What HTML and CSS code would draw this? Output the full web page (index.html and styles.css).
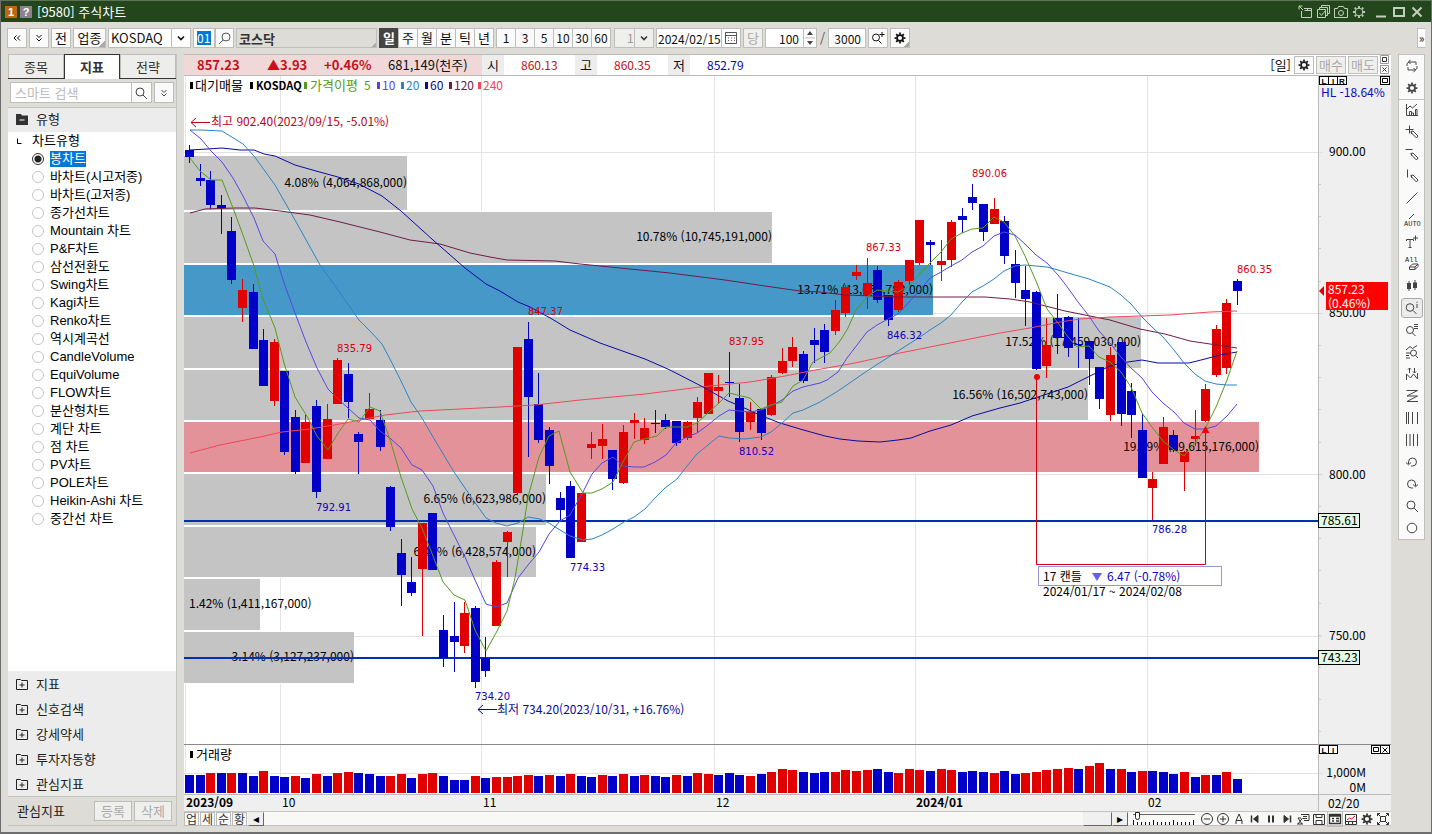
FILE: index.html
```html
<!DOCTYPE html>
<html lang="ko">
<head>
<meta charset="utf-8">
<title>[9580] 주식차트</title>
<link rel="stylesheet" href="styles.css">
</head>
<body>
<svg class="defs" aria-hidden="true">
  <symbol id="gear" viewBox="-1 -1 16 16"><circle cx="7" cy="7" r="3.4" fill="none" stroke="currentColor" stroke-width="2"/><path d="M7 .8v2.4M7 10.8v2.4M.8 7h2.4M10.8 7h2.4M2.6 2.6l1.8 1.8M9.6 9.6l1.8 1.8M11.4 2.6L9.6 4.4M4.4 9.6l-1.8 1.8" stroke="currentColor" stroke-width="2" fill="none"/></symbol>
  <symbol id="lens" viewBox="0 0 14 14"><circle cx="6" cy="6" r="4"/><path d="M9 9l4 4"/></symbol>
  <symbol id="chev" viewBox="0 0 14 14"><path d="M4 5.5l3 3 3-3" stroke-width="1.6"/></symbol>
  <symbol id="dchev" viewBox="0 0 14 14"><path d="M4.500 4l2.500 2.500L9.500 4M4.500 7.500L7 10l2.500-2.500"/></symbol>
  <symbol id="dleft" viewBox="0 0 14 14"><path d="M6.500 4.500L4 7l2.500 2.500M10 4.500L7.500 7 10 9.500"/></symbol>
  <symbol id="pencil" viewBox="0 0 14 14"><path d="M6 6.500l2-.5 5 5-1.500 2-5-5zM6 6.500l1 2.500"/></symbol>
  <symbol id="plusbox" viewBox="0 0 14 14"><path d="M1.500 2.500h4l1 1h6v9h-11zM7 5.500v5M4.500 8h5"/></symbol>
</svg>
<div class="window">
  <header class="titlebar">
    <span class="badge badge-orange">1</span><span class="badge badge-grey">?</span>
    <h1 class="title">[9580] 주식차트</h1>
    <div class="win-tools">
      <button aria-label="분리"><svg class="ic" viewBox="0 0 14 14"><path d="M1 1l4 4M1 1h3.500M1 1v3.500M6 3.500h7.500v9h-10V6M9.500 3.500V6M6.500 5.500h7"/></svg></button>
      <button aria-label="복사"><svg class="ic" viewBox="0 0 14 14"><path d="M1.500 4.500h8v8h-8zM3.500 4V2.500h8v8H10M5.500 2V.5h8v8H12M3.500 8l2 2.500 4-5"/></svg></button>
      <button aria-label="캡처"><svg class="ic" viewBox="0 0 14 14"><path d="M.5 3.500h3l1-2h5l1 2h3v9H.5z"/><circle cx="7" cy="8" r="2.500"/></svg></button>
      <button aria-label="설정"><svg class="ic" viewBox="0 0 14 14"><circle cx="7" cy="7" r="3.800"/><path stroke-width="1.800" d="M7 1v2M7 11v2M1 7h2M11 7h2M2.700 2.700l1.400 1.400M10 10l1.300 1.300M11.300 2.700L10 4M4 10l-1.300 1.300"/></svg></button>
      <button class="wbtn" aria-label="최소화"><svg class="ic thick" viewBox="0 0 14 14"><path d="M2 11.500h10"/></svg></button>
      <button class="wbtn" aria-label="최대화"><svg class="ic thick" viewBox="0 0 14 14"><path d="M2 3h10v8H2z"/></svg></button>
      <button class="wbtn" aria-label="닫기"><svg class="ic thick" viewBox="0 0 14 14"><path d="M2.500 2.500l9 9M11.500 2.500l-9 9"/></svg></button>
    </div>
  </header>

  <div class="toolbar">
    <button class="tb sq" aria-label="왼쪽 접기"><svg class="ic"><use href="#dleft"/></svg></button>
    <button class="tb sq" aria-label="펼치기"><svg class="ic"><use href="#dchev"/></svg></button>
    <button class="tb sq">전</button>
    <button class="tb wide corner">업종</button>
    <label class="pick pick-market"><select aria-label="시장"><option>KOSDAQ</option></select><svg class="ic"><use href="#chev"/></svg></label>
    <label class="code"><input aria-label="업종 코드" value="01" size="2"></label>
    <button class="tb sq joined" aria-label="검색"><svg class="ic flip"><use href="#lens"/></svg></button>
    <input class="name" aria-label="업종명" value="코스닥" readonly>
    <div class="seg">
      <button class="tb on">일</button><button class="tb">주</button><button class="tb">월</button><button class="tb">분</button><button class="tb">틱</button><button class="tb">년</button>
    </div>
    <div class="seg seg-num">
      <button class="tb">1</button><button class="tb">3</button><button class="tb">5</button><button class="tb">10</button><button class="tb">30</button><button class="tb">60</button>
    </div>
    <label class="pick pick-unit"><select aria-label="단위" disabled><option>1</option></select><svg class="ic"><use href="#chev"/></svg></label>
    <div class="datebox"><input aria-label="날짜" value="2024/02/15"><button aria-label="달력"><svg class="ic" viewBox="0 0 14 14"><path d="M1.500 1.500h11v11h-11zM1.500 4.500h11M4 7h1M7 7h1M10 7h1M4 9.500h1M7 9.500h1M10 9.500h1"/></svg></button></div>
    <button class="tb sq dim">당</button>
    <div class="spin"><input aria-label="표시 개수" value="100"><svg class="spin-ic" viewBox="0 0 12 18"><path d="M6 2l3 4H3zM6 16l3-4H3z" fill="#444"/><path d="M1 9h10" stroke="#bbb"/></svg></div>
    <span class="slash">/</span>
    <input class="total" aria-label="전체 개수" value="3000">
    <button class="tb sq" aria-label="확대"><svg class="ic" viewBox="0 0 14 14"><circle cx="5" cy="6.500" r="3.500"/><path d="M7.500 9.500l3 3M11 1v5M8.500 3.500h5"/></svg></button>
    <button class="tb sq corner" aria-label="설정"><svg class="ic"><use href="#gear"/></svg></button>
    <button class="fold" aria-label="오른쪽 펼치기">»</button>
  </div>

  <div class="main">
    <aside class="sidebar">
      <nav class="tabs"><button>종목</button><button class="on">지표</button><button>전략</button></nav>
      <div class="search"><input aria-label="스마트 검색" placeholder="스마트 검색"><button aria-label="찾기"><svg class="ic"><use href="#lens"/></svg></button><button class="apart" aria-label="더 보기"><svg class="ic"><use href="#dchev"/></svg></button></div>
      <h2 class="group"><svg class="ic folder" viewBox="0 0 14 14"><path d="M1 2h5l1 1.500h6V13H1z" fill="#333" stroke="none"/><path d="M4.500 8h5" stroke="#fff"/></svg>유형</h2>
      <div class="tree">
        <div class="tree-root"><svg class="ic" viewBox="0 0 14 14"><path d="M5.500 4.500v5h4"/></svg>차트유형</div>
        <label class="row sel"><input type="radio" name="t" checked><span>봉차트</span></label>
        <label class="row"><input type="radio" name="t"><span>바차트(시고저종)</span></label>
        <label class="row"><input type="radio" name="t"><span>바차트(고저종)</span></label>
        <label class="row"><input type="radio" name="t"><span>종가선차트</span></label>
        <label class="row"><input type="radio" name="t"><span>Mountain 차트</span></label>
        <label class="row"><input type="radio" name="t"><span>P&amp;F차트</span></label>
        <label class="row"><input type="radio" name="t"><span>삼선전환도</span></label>
        <label class="row"><input type="radio" name="t"><span>Swing차트</span></label>
        <label class="row"><input type="radio" name="t"><span>Kagi차트</span></label>
        <label class="row"><input type="radio" name="t"><span>Renko차트</span></label>
        <label class="row"><input type="radio" name="t"><span>역시계곡선</span></label>
        <label class="row"><input type="radio" name="t"><span>CandleVolume</span></label>
        <label class="row"><input type="radio" name="t"><span>EquiVolume</span></label>
        <label class="row"><input type="radio" name="t"><span>FLOW차트</span></label>
        <label class="row"><input type="radio" name="t"><span>분산형차트</span></label>
        <label class="row"><input type="radio" name="t"><span>계단 차트</span></label>
        <label class="row"><input type="radio" name="t"><span>점 차트</span></label>
        <label class="row"><input type="radio" name="t"><span>PV차트</span></label>
        <label class="row"><input type="radio" name="t"><span>POLE차트</span></label>
        <label class="row"><input type="radio" name="t"><span>Heikin-Ashi 차트</span></label>
        <label class="row"><input type="radio" name="t"><span>중간선 차트</span></label>
      </div>
      <div class="accordion">
        <button><svg class="ic"><use href="#plusbox"/></svg>지표</button>
        <button><svg class="ic"><use href="#plusbox"/></svg>신호검색</button>
        <button><svg class="ic"><use href="#plusbox"/></svg>강세약세</button>
        <button><svg class="ic"><use href="#plusbox"/></svg>투자자동향</button>
        <button><svg class="ic"><use href="#plusbox"/></svg>관심지표</button>
      </div>
      <div class="side-foot"><span>관심지표</span><button disabled>등록</button><button disabled>삭제</button></div>
    </aside>

    <section class="panel">
      <div class="quote">
        <div class="quote-pink"><b class="q-price">857.23</b><b class="q-diff">▲3.93</b><b class="q-rate">+0.46%</b><span>681,149(천주)</span></div>
        <span class="q-key">시</span><span class="q-val up">860.13</span>
        <span class="q-key">고</span><span class="q-val up">860.35</span>
        <span class="q-key">저</span><span class="q-val down">852.79</span>
        <span class="q-period">[일]</span>
        <button class="qb sq" aria-label="차트 설정"><svg class="ic"><use href="#gear"/></svg></button>
        <button class="qb" disabled>매수</button><button class="qb" disabled>매도</button>
        <svg class="mini" viewBox="0 0 10 20"><path d="M.5.5h8v8h-8zM.5 10.500h8v8h-8z" fill="#fff" stroke="#999"/><path d="M2.500 2.500h4v4h-4zM2.500 12.500l4 4M6.500 12.500l-4 4" fill="none" stroke="#333"/></svg>
      </div>
      <svg class="chart" id="chart" viewBox="184 76 1207 735" preserveAspectRatio="xMinYMin meet" role="img" aria-label="코스닥 일봉 차트"></svg>
      <div class="bottombar">
        <button class="bt">업</button><button class="bt">세</button><button class="bt">순</button><button class="bt">황</button>
        <button class="arrow" aria-label="왼쪽">◂</button>
        <div class="track"><div class="thumb"></div></div>
        <button class="arrow" aria-label="오른쪽">▸</button>
        <div class="zoomer"><input type="range" aria-label="배율" min="0" max="100" value="3"><svg viewBox="0 0 62 5"><path id="ticks" stroke="#111"/></svg></div>
        <div class="icons">
          <button aria-label="축소"><svg class="ic" viewBox="0 0 14 14"><circle cx="7" cy="7" r="5.500"/><path d="M4 7h6"/></svg></button>
          <button aria-label="확대"><svg class="ic" viewBox="0 0 14 14"><circle cx="7" cy="7" r="5.500"/><path d="M4 7h6M7 4v6"/></svg></button>
          <button aria-label="자동"><svg class="ic" viewBox="0 0 14 14"><path d="M4 12V9l3-7 3 7v3M4 8.500h6"/></svg></button>
          <button aria-label="처음"><svg class="ic" viewBox="0 0 14 14"><path d="M3.500 3.500v7" stroke-width="1.500"/><path d="M10 3.500v7L5.500 7z" fill="currentColor"/></svg></button>
          <button aria-label="정지"><svg class="ic thick" viewBox="0 0 14 14"><path d="M5 3.500v7M9 3.500v7"/></svg></button>
          <button aria-label="마지막"><svg class="ic" viewBox="0 0 14 14"><path d="M10.500 3.500v7" stroke-width="1.500"/><path d="M4 3.500v7L8.500 7z" fill="currentColor"/></svg></button>
          <button aria-label="되돌리기"><svg class="ic" viewBox="0 0 14 14"><path d="M5 2.500h8v6H8M7 4.500h4M7 6.500h4M2 6l4 6M6.500 6L2 12M1 12h6M2 6h3"/></svg></button>
          <button aria-label="저장"><svg class="ic" viewBox="0 0 14 14"><path d="M1.500 2.500h11v10h-11zM4 2.500v3h6v-3M4 12.500v-4h6v4"/></svg></button>
          <button class="on" aria-label="표"><svg class="ic" viewBox="0 0 14 14"><path d="M1.500 2.500h11v9h-11zM1.500 4h11M4 6.500h2M4 9h2M8 6.500h3M8 9h3" stroke-width="1.400"/></svg></button>
          <button aria-label="지표 차트"><svg class="ic" viewBox="0 0 14 14"><path d="M1.500 2.500h11v10h-11zM1.500 9.500h11M4.500 9.500v3M8.500 9.500v3"/><path d="M3 8l2.500-2 2 1L11 4" stroke="#b22"/></svg></button>
          <button aria-label="설정"><svg class="ic"><use href="#gear"/></svg></button>
          <button aria-label="전체 화면"><svg class="ic" viewBox="0 0 14 14"><path d="M4.500 4.500h5v5h-5zM1.500 4V1.500H4M10 1.500h2.500V4M1.500 10v2.500H4M10 12.500h2.500V10M1.500 1.500l3 3M12.500 1.500l-3 3M1.500 12.500l3-3M12.500 12.500l-3-3"/></svg></button>
        </div>
      </div>
    </section>

    <nav class="rail">
      <button aria-label="새로고침"><svg class="ic" viewBox="0 0 14 14"><path d="M2 7V4.500L4 3h7v3M5.500.8L3.500 3l2 2M12 7v2.500L10 11H3V8M8.500 9l2 2-2 2.200"/></svg></button>
      <button aria-label="설정"><svg class="ic"><use href="#gear"/></svg></button>
      <hr>
      <button aria-label="지표"><svg class="ic" viewBox="0 0 14 14"><path d="M1.500 1v11.500H13M2 6l3-3 2.500 2L12 1M4.500 12V8.500h2V12M6.500 12v-2h2v2M10.500 12V6.500h1.500V12"/></svg></button>
      <button aria-label="십자선"><svg class="ic" viewBox="0 0 14 14"><path d="M4.500.5v8M.5 4.500h8"/><use href="#pencil"/></svg></button>
      <button aria-label="수평선"><svg class="ic" viewBox="0 0 14 14"><path d="M.5 2.500h7"/><use href="#pencil"/></svg></button>
      <button aria-label="수직선"><svg class="ic" viewBox="0 0 14 14"><path d="M2.500.5v8"/><use href="#pencil"/></svg></button>
      <button aria-label="추세선"><svg class="ic" viewBox="0 0 14 14"><path d="M1.500 12.500l11-11"/></svg></button>
      <button aria-label="자동 추세선"><svg class="ic auto" viewBox="0 0 18 14"><path d="M6 6l5-5"/><text x="1" y="13">AUTO</text></svg></button>
      <button aria-label="글자"><svg class="ic" viewBox="0 0 14 14"><path d="M1.500 6V4.500h7V6M5 4.500v8M3.500 12.500h3M10.500.5v5M8 3h5"/></svg></button>
      <button aria-label="모두 지우기"><svg class="ic auto" viewBox="0 0 14 14"><text x="0" y="5">All</text><path d="M4.500 10l3-3h5.500v2.500l-3 3H4.500zM4.500 10h5.500v2.500M10 10l3-3"/></svg></button>
      <button aria-label="봉"><svg class="ic" viewBox="0 0 14 14"><path d="M4 2v10M10 1v10"/><path d="M2 4h4v6H2zM8 3.500h4V9H8z" fill="currentColor" stroke="none"/></svg></button>
      <button class="on" aria-label="정보 조회"><svg class="ic" viewBox="0 0 14 14"><circle cx="5" cy="6.500" r="3.800"/><path d="M8 9.500l3.500 3.500M12 3v4M12 .8v1"/></svg></button>
      <button aria-label="목록 조회"><svg class="ic" viewBox="0 0 14 14"><circle cx="5" cy="7" r="3.500"/><path d="M7.500 10l3 3M9 1.500h4M9 3.500h4M9 5.500h4"/></svg></button>
      <button aria-label="차트 조회"><svg class="ic" viewBox="0 0 14 14"><path d="M1 5l4-3.500 2.500 2L12 .5M1 8h4M1 10.500h3M1 13h4"/><circle cx="8.500" cy="8" r="3"/><path d="M10.500 10.500l2.500 2.500"/></svg></button>
      <button aria-label="고저 표시"><svg class="ic" viewBox="0 0 14 14"><path d="M1.500 13V7l4 4 3-4 4 5V6M4.500 6V1M3 2.500L4.500 1 6 2.500M9.500 1v5M8 4.500L9.500 6 11 4.500"/></svg></button>
      <button aria-label="지그재그"><svg class="ic" viewBox="0 0 14 14"><path d="M1.500 1.500h11L2 7h10.500L2 12.500h11"/></svg></button>
      <button aria-label="시간대"><svg class="ic" viewBox="0 0 14 14"><path d="M1.500 1v12M3.500 1v12M7.500 1v12M12.500 1v12"/></svg></button>
      <button aria-label="등간격"><svg class="ic" viewBox="0 0 14 14"><path d="M1.500 1v12M5 1v12M8.500 1v12M12.500 1v12"/></svg></button>
      <button aria-label="이전"><svg class="ic" viewBox="0 0 14 14"><path d="M3.500 9V7a4 4 0 1 1 4 4H6M1 7.500l2.500 2.300L6 7.500"/></svg></button>
      <button aria-label="다음"><svg class="ic" viewBox="0 0 14 14"><path d="M10.500 9V7a4 4 0 1 0-4 4H8M13 7.500l-2.500 2.300L8 7.500"/></svg></button>
      <button aria-label="돋보기"><svg class="ic"><use href="#lens"/></svg></button>
      <button aria-label="원"><svg class="ic" viewBox="0 0 14 14"><circle cx="7" cy="7" r="4.800"/></svg></button>
    </nav>
  </div>
</div>
<script src="chart.js"></script>
</body>
</html>
```

FILE: styles.css
```css
* { box-sizing: border-box; }
body {
  margin: 0;
  background: #dddcd6;
  color: #111;
  font: 13px/16px "Noto Sans CJK KR", "Liberation Sans", sans-serif;
}
button, input, select { font: inherit; color: inherit; margin: 0; padding: 0; border: 0; border-radius: 0; background: none; }
.defs { display: none; }
.ic { width: 14px; height: 14px; display: block; fill: none; stroke: currentColor; stroke-width: 1; flex: none; }
.thick { stroke-width: 2; }
.flip { transform: scaleX(-1); }

.window { min-height: 100vh; display: flex; flex-direction: column; border: solid #6e6e6e; border-width: 0 1px 2px 1px; }

.titlebar { display: flex; align-items: center; height: 22px; padding: 0 7px 0 4px; gap: 3px; background: #24461c; border-top: 1px solid #5c7355; color: #fff; }
.badge { width: 12px; height: 12px; font: bold 11px/12px "Liberation Sans", sans-serif; text-align: center; }
.badge-orange { background: #c0660c; }
.badge-grey { background: #8a8290; }
.title { margin: 0 0 0 2px; font-size: 13px; font-weight: normal; }
.win-tools { margin-left: auto; display: flex; gap: 4px; color: #c3cfbe; }
.win-tools .wbtn { margin-left: 4px; margin-right: -4px; }
.win-tools .wbtn + .wbtn { margin-left: 4px; }
.win-tools button:last-child { margin-right: 0; }

.toolbar { display: flex; align-items: center; height: 32px; padding-left: 6px; gap: 2px; }
.tb { height: 20px; min-width: 18px; background: #fafafa; border: 1px solid #bdbdb9; line-height: 18px; display: flex; align-items: center; justify-content: center; }
.tb.sq { width: 20px; }
.tb.wide { width: 33px; }
.tb.joined { width: 19px; margin-left: -2px; color: #555; }
.tb.dim { color: #aaa; background: #efefed; }
.corner { background: linear-gradient(135deg, transparent 86%, #aaa 86%), #fafafa; }
.pick { display: grid; grid-template-columns: 1fr 19px; align-items: center; height: 20px; background: linear-gradient(#bdbdb9, #bdbdb9) right 18px top / 1px 100% no-repeat, #fff; border: 1px solid #bdbdb9; }
.pick select { grid-area: 1 / 1 / 2 / 3; appearance: none; width: 100%; height: 18px; padding-left: 2px; outline: 0; }
.pick .ic { grid-area: 1 / 2; justify-self: center; pointer-events: none; }
.pick-market { width: 83px; }
.pick-unit { width: 40px; margin-left: 1px; background-color: #efefed; color: #333; }
.pick-unit select { padding-left: 12px; color: #999; opacity: 1; font-size: 12px; }
.code { height: 20px; width: 22px; padding: 2px 3px; background: #fff; border: 1px solid #bdbdb9; display: flex; }
.code input { width: 14px; height: 14px; line-height: 14px; font-size: 12px; background: #0078d7; color: #fff; }
.name { width: 141px; height: 20px; padding-left: 2px; font-weight: bold; color: #333; border: 1px solid #bdbdb9; background: linear-gradient(135deg, transparent 97%, #aaa 97%), #dddcd6; }
.seg { display: flex; }
.seg .tb { width: 20px; }
.seg .tb + .tb { margin-left: -1px; }
.seg .tb.on { background: #444; border-color: #444; color: #fff; font-weight: bold; }
.seg-num, .spin, .total { font-size: 12px; }
.datebox, .spin { display: flex; align-items: center; height: 20px; background: #fff; border: 1px solid #bdbdb9; }
.datebox input { width: 65px; padding-left: 1px; font-size: 12px; height: 18px; border-right: 1px solid #bdbdb9; }
.datebox button { width: 18px; padding-left: 2px; color: #555; }
.spin input { width: 38px; height: 18px; padding-right: 4px; text-align: right; border-right: 1px solid #bdbdb9; }
.spin-ic { width: 12px; height: 18px; }
.slash { width: 7px; text-align: center; color: #555; }
.total { width: 38px; height: 20px; padding-right: 4px; text-align: right; background: #fff; border: 1px solid #bdbdb9; }
.fold { width: 8px; height: 20px; margin: 0 6px 0 auto; background: #fff; border: 1px solid #bdbdb9; border-right: 0; font-size: 12px; line-height: 16px; }

.main { flex: 1; display: flex; align-items: stretch; padding: 0 7px 6px; }
.sidebar { width: 169px; display: flex; flex-direction: column; border: solid #c4c4c0; border-width: 0 1px 1px 0; background: #ececec; margin-right: 7px; }
.tabs { display: flex; border-bottom: 1px solid #333; height: 25px; }
.tabs button { flex: 1; border: 1px solid #bdbdb9; border-bottom: 0; background: #ededeb; color: #333; }
.tabs .on { background: #fff; font-weight: bold; border-color: #333; margin-bottom: -1px; }
.search { display: flex; height: 28px; padding: 3px 2px 4px; background: #dddcd6; }
.search input { flex: 1; min-width: 0; padding-left: 4px; background: #fff; border: 1px solid #bdbdb9; }
.search input::placeholder { color: #bbb; opacity: 1; }
.search button { width: 20px; background: #fafafa; border: 1px solid #bdbdb9; border-left: 0; padding-left: 2px; color: #444; }
.search .apart { margin-left: 2px; border-left: 1px solid #bdbdb9; }
.group { display: flex; align-items: center; gap: 7px; height: 25px; margin: 0; padding: 0 0 2px 7px; font-size: 13px; font-weight: normal; color: #222; border-top: 1px solid #c4c4c0; }
.tree { flex: 1; background: #fff; color: #000; font-family: "Liberation Sans", "Noto Sans CJK KR", sans-serif; }
.tree-root { display: flex; align-items: center; height: 18px; padding-left: 4px; gap: 6px; }
.row { display: flex; align-items: center; height: 18px; padding-left: 24px; gap: 6px; }
.row span { line-height: 16px; }
.row input { appearance: none; width: 12px; height: 12px; border: 1px solid #c4c4c4; border-radius: 50%; background: #fff; }
.row input:checked { border-color: #333; background: radial-gradient(#222 0 3px, #fff 4px); }
.sel span { background: #0078d7; color: #fff; }
.accordion button { display: flex; align-items: center; gap: 7px; width: 100%; height: 25px; padding-left: 7px; color: #222; }
.side-foot { display: flex; align-items: center; gap: 2px; height: 29px; padding: 0 4px 0 9px; background: #dddcd6; border-top: 1px solid #c4c4c0; color: #222; }
.side-foot span { margin-right: auto; }
.side-foot button { width: 38px; height: 20px; background: #efefed; border: 1px solid #bdbdb9; color: #aaa; line-height: 16px; }

.panel { flex: 1; min-width: 0; display: flex; flex-direction: column; border: solid #bbb; border-width: 1px 0 0 0; background: #fff; }
.quote { display: flex; align-items: center; height: 21px; border-bottom: 1px solid #bbb; }
.quote-pink { display: flex; align-items: center; width: 298px; height: 100%; padding-left: 13px; background: #f0d8d8; white-space: nowrap; }
.quote-pink b { color: #c8101c; }
.q-price { width: 70px; }
.q-diff { width: 57px; }
.q-rate { width: 64px; }
.q-key { width: 22px; line-height: 20px; text-align: center; background: #ededed; }
.q-val { width: 71px; padding-left: 17px; font-size: 12px; }
.up { color: #c8101c; }
.down { color: #0a0aa0; }
.q-period { margin-left: auto; margin-right: 3px; }
.qb { width: 30px; height: 18px; margin-right: 2px; background: #efefed; border: 1px solid #bdbdb9; line-height: 14px; color: #aaa; }
.qb.sq { width: 20px; background: #fafafa; color: #222; padding-left: 2px; }
.mini { width: 10px; height: 20px; margin-right: 1px; }
.chart { display: block; width: 100%; flex: 1; min-height: 0; font: 12px "Noto Sans CJK KR", "Liberation Sans", sans-serif; }
.chart .small { font: 10px "DejaVu Sans", "Liberation Sans", sans-serif; }
.chart .lg { font-size: 13px; }
.chart .bold { font-weight: bold; }
.chart .name-label { font-size: 11px; font-weight: bold; }
.chart .tiny { font: bold 8px "Liberation Sans", sans-serif; }
.bottombar { display: flex; align-items: center; height: 15px; background: #f8f8f6; border: 1px solid #c4c4c0; border-width: 1px 0; color: #333; }
.bt { width: 15px; height: 14px; border: 1px solid #bbb; margin-right: 1px; font-size: 12px; line-height: 11px; background: #fafafa; }
.arrow { width: 16px; height: 14px; border: 1px solid; border-color: #eee #666 #666 #eee; background: #f0f0f0; font: 12px/10px "DejaVu Sans", sans-serif; color: #000; }
.track { flex: 1; display: flex; justify-content: flex-end; height: 14px; }
.thumb { width: 29px; border: 1px solid; border-color: #eee #666 #666 #eee; background: #f0f0f0; }
.zoomer { width: 62px; margin: 0 5px; display: grid; grid-template-rows: 8px 5px; }
.zoomer input { appearance: none; width: 100%; height: 8px; background: linear-gradient(#666, #666) 0 2px / 100% 1px no-repeat; }
.zoomer input::-webkit-slider-thumb { appearance: none; width: 5px; height: 8px; background: #fff; border: 1px solid #222; border-radius: 0 0 3px 3px; }
.zoomer svg { width: 100%; height: 5px; }
.icons { display: flex; gap: 2px; margin-right: 1px; }
.icons .on { outline: 1px solid #bbb; }

.rail { width: 27px; align-self: flex-start; margin: 0 -1px 0 7px; background: #fafafa; border: 1px solid #c0c0bc; display: flex; flex-direction: column; align-items: center; color: #444; }
.rail button { width: 22px; height: 22px; padding: 0 0 0 3px; border: 1px solid transparent; }
.rail hr { width: 100%; height: 1px; margin: 0 0 -1px; border: 0; background: #c0c0bc; }
.rail .on { height: 20px; margin: 1px 0; border-color: #aaa; border-radius: 3px; background: #ececec; }
.rail .auto text { font: 7px "Liberation Mono", monospace; fill: #222; stroke: none; }
.rail .auto[viewBox^="0 0 18"] { width: 18px; margin-left: -2px; }
```

FILE: chart.js
```js
const RED = '#e00000', BLUE = '#0000c8';
const X0 = 189.5, STEP = 10.586;

// colour, body top, body bottom, wick top, wick bottom
const candles = `B150,157,145,163 B178,181,164,186 B180,205,171,209 B205,208,195,234 B231,280,217,284
R290,308,279,322 B292,349,284,349 B340,386,329,386 R342,401,339,406 B371,452,371,455
B417,472,410,474 R422,463,415,463 B406,492,400,498 R419,459,404,459 R360,404,358,404
B374,402,363,418 B434,442,432,474 R409,419,393,419 B420,447,410,451 B487,527,486,531
B553,575,539,606 B582,593,557,596 R523,569,523,636 B513,570,513,570 B630,658,615,667
B636,642,602,672 R613,646,602,653 B608,682,606,688 B658,671,637,677 R562,626,560,626
R532,542,531,577 R347,493,347,495 B339,397,322,457 B404,440,373,443 B430,466,427,484
B498,510,492,520 B486,558,481,558 R493,542,493,542 R444,448,432,459 R439,446,424,459
B450,479,450,490 R432,483,425,484 R420,423,413,439 R428,440,418,444 B423,424,410,433
B420,427,414,429 B421,443,421,446 R422,438,421,440 R402,418,397,433 R373,414,373,414
R387,391,375,404 B382,383,352,397 B398,432,384,442 R412,422,402,430 B409,433,409,440
R377,415,375,416 R361,373,348,374 R347,361,337,367 B354,381,351,383 B340,345,328,363
B330,352,324,363 R310,331,300,335 R287,313,285,317 R272,276,265,280 R283,296,258,309
B270,300,266,303 B295,320,295,326 R282,310,280,312 R260,281,260,286 R220,263,220,265
B242,245,240,265 R261,265,240,281 R222,260,220,267 B216,220,208,233 B197,203,184,210
B204,232,204,241 R209,224,198,224 B221,256,216,264 B264,283,250,298 B290,299,266,326
B292,369,291,370 R345,366,318,378 B318,338,294,354 B317,348,316,357 B344,345,318,368
B341,359,341,385 B367,399,367,409 R355,415,347,421 B342,414,342,426 B391,415,383,438
B430,478,414,478 R479,488,472,520 R427,464,417,464 B435,450,430,452 R452,462,451,491
R436,439,410,446 R389,421,384,422 R329,375,325,377 R303,368,299,374 B281,291,279,305`.split(/\s+/);

// colour and top of each volume bar
const volume = `B775 B775 R773 B773 R773 B773 B776 R771 B776 B777 R776 B778 R774 B776 R773 R772 B773 B774 B776 R776
R774 B778 R774 R773 B776 B780 B780 R776 B778 R777 R777 R776 R775 B776 R775 B776 R774 B776 B777 R775
B776 R774 B776 R775 B776 B777 R775 B776 R773 R774 B775 B773 B775 R776 B774 R772 R769 R770 B772 B773
B772 R772 R770 R771 R770 B769 B772 R773 R769 R770 B771 R769 R770 B772 B771 B772 R773 B771 B774 R773
R772 R770 R769 R768 B769 R766 R763 B769 R769 B772 R771 B771 B772 B774 R772 B777 R775 B775 R772 B779`.split(/\s+/);

// top, height, right edge, label, label baseline, fill
const profile = [
  [156, 54, 407, '4.08% (4,064,868,000)', 187], [212, 51, 772, '10.78% (10,745,191,000)', 241],
  [265, 50, 933, '13.71% (13,665,782,000)', 294, '#4698c8'], [317, 51, 1141, '17.52% (17,459,030,000)', 346],
  [370, 50, 1088, '16.56% (16,502,743,000)', 399], [422, 50, 1259, '19.69% (19,615,176,000)', 451, '#e4929a'],
  [474, 51, 546, '6.65% (6,623,986,000)', 503], [527, 50, 536, '6.45% (6,428,574,000)', 556],
  [579, 51, 260, '1.42% (1,411,167,000)', 608], [632, 51, 354, '3.14% (3,127,237,000)', 661]
];

const averages = {
  '#6e1c44': '190,213 205,209 235,208 255,208 280,211 310,215 340,222 380,232 410,240 440,244 470,253 490,257 507,260 555,261 580,264 610,267 670,273 725,280 765,286 800,291 820,292 845,295 900,297 985,297 1010,299 1030,302 1065,311 1110,320 1140,329 1165,334 1190,341 1210,344 1237,348',
  '#f04858': '190,453 220,445 260,437 282,432 310,429 340,424 385,415 420,411 500,407 535,405 580,400 645,394 700,387 750,382 785,376 810,371 855,363 900,353 940,345 1000,333 1030,328 1060,322 1080,319 1110,317 1170,315 1210,312 1237,311',
  '#0a0aa0': '190,150 207,149 222,148 240,150 254,150 264,154 275,156 295,165 316,171 338,177 359,184 382,196 401,211 433,240 465,268 486,284 500,291 518,302 530,307 552,319 570,330 600,343 645,359 670,370 703,387 728,401 740,406 762,416 780,423 800,429 825,436 840,439 858,441 880,442 898,440 911,438 930,431 951,425 972,416 1000,408 1020,403 1047,394 1068,387 1088,377 1110,366 1121,363 1142,360 1158,363 1189,363 1205,359 1220,355 1237,352',
  '#2c84c4': '190,130 202,130 222,131 243,144 254,156 275,185 295,220 320,265 338,290 359,320 370,331 382,344 391,361 401,381 411,402 422,418 433,437 454,472 476,504 486,518 496,523 507,526 518,523 528,517 540,519 549,523 560,530 570,536 583,540 592,539 602,535 613,529 624,522 634,517 645,509 655,498 665,488 677,479 687,466 697,454 708,445 719,436 729,438 745,439 761,437 771,432 782,423 793,413 803,410 820,402 838,391 867,371 898,351 920,337 930,330 941,323 951,315 962,302 972,292 983,286 994,279 1004,271 1015,266 1025,265 1047,267 1058,270 1068,273 1089,279 1110,287 1121,295 1131,304 1142,317 1152,327 1163,337 1174,350 1184,363 1195,374 1205,381 1216,384 1227,385 1237,385',
  '#5548e0': '190,130 201,139 211,151 222,162 233,178 243,196 254,218 263,241 275,254 284,283 295,313 306,342 317,368 328,389 338,399 348,408 359,418 370,420 380,431 391,439 401,448 412,465 422,470 433,486 443,513 454,535 465,557 475,580 486,604 496,607 507,603 518,578 528,565 539,552 549,534 560,521 570,515 583,492 592,474 602,463 613,457 623,466 634,467 644,467 655,462 666,455 676,443 687,437 697,433 708,425 719,416 729,410 740,411 750,412 761,410 771,406 782,400 793,391 803,387 820,383 827,380 838,372 847,358 867,332 877,325 888,319 898,314 909,302 920,290 930,278 941,272 951,266 962,260 972,252 983,246 994,236 1004,232 1015,235 1025,244 1036,255 1047,263 1058,275 1068,288 1078,302 1089,316 1099,331 1110,343 1121,357 1131,368 1142,378 1152,392 1163,403 1174,412 1184,423 1195,429 1205,429 1216,426 1227,416 1237,404',
  '#559a1e': '190,158 200,171 211,180 222,180 233,208 243,235 254,266 263,299 275,328 284,363 295,397 308,418 317,436 328,450 338,433 348,419 359,422 370,407 380,411 391,443 401,477 412,509 422,528 433,556 443,582 454,595 465,600 475,630 486,651 496,633 507,611 515,578 523,530 528,497 539,457 549,436 559,431 570,472 583,493 592,493 602,489 613,482 623,462 634,442 644,439 657,436 666,427 676,427 687,427 697,423 708,413 719,403 729,393 750,398 761,409 771,405 782,402 793,386 803,380 813,362 830,353 840,341 848,328 856,310 867,297 877,290 888,291 898,292 909,286 920,273 930,263 941,252 951,239 962,233 972,229 983,228 994,217 1004,222 1015,236 1025,256 1036,281 1047,309 1058,323 1068,337 1077,347 1089,346 1099,357 1110,362 1121,372 1131,387 1142,413 1152,427 1163,441 1174,450 1184,456 1195,443 1205,429 1216,407 1227,380 1237,351'
};

const out = [];
const rect = (x, y, w, h, fill, extra = '') => out.push(`<rect x="${x}" y="${y}" width="${w}" height="${h}" fill="${fill}" shape-rendering="crispEdges" ${extra}/>`);
const text = (x, y, s, fill = '#000', cls = '', anchor = 'start') => out.push(`<text x="${x}" y="${y}" fill="${fill}" class="${cls}" text-anchor="${anchor}">${s}</text>`);
const path = (d, stroke, extra = 'fill="none"') => out.push(`<path d="${d}" stroke="${stroke}" ${extra}/>`);

// backgrounds and grid
rect(184, 76, 1134, 719, '#fff');
rect(1318, 76, 73, 735, '#efefef');
rect(184, 795, 1207, 16, '#efefef');
[185, 280, 481, 714, 915, 1147].forEach(x => rect(x, 76, 1, 719, '#e4e4e4'));
[152, 313, 474, 636].forEach(y => rect(184, y, 1139, 1, '#e2e2e2'));
rect(184, 773, 1139, 1, '#e2e2e2');
for (let y = 184; y < 740; y += 32.2) rect(1318, Math.round(y), 3, 1, '#ccc');

profile.forEach(([y, h, right, label, base, fill = '#c4c4c4']) => {
  rect(184, y - 1, right - 184, h + 2, '#fff');
  rect(184, y, right - 184, h, fill);
});
profile.forEach(([y, h, right, label, base]) => right < 300
  ? text(189, base, label)
  : text(right, base, label, '#000', '', 'end'));

rect(184, 520, 1134, 2, '#0030b0');
rect(184, 657, 1134, 2, '#0030b0');

candles.forEach((c, i) => {
  const [top, bottom, hi, lo] = c.slice(1).split(',').map(Number);
  const colour = c[0] === 'R' ? RED : BLUE;
  const x = Math.round(X0 + i * STEP - 0.5);
  rect(x, hi, 1, lo - hi, colour);
  rect(x - 4, top, 9, bottom - top, colour);
});
Object.entries(averages).forEach(([colour, points]) =>
  out.push(`<polyline points="${points}" fill="none" stroke="${colour}" stroke-width="1"/>`));

// highs and lows
[[337, 352, '835.79'], [528, 315, '847.37'], [729, 345, '837.95'], [866, 251, '867.33'], [972, 177, '890.06'], [1237, 273, '860.35']]
  .forEach(([x, y, s]) => text(x, y, s, '#d80010', 'small'));
[[316, 511, '792.91'], [475, 700, '734.20'], [570, 571, '774.33'], [739, 455, '810.52'], [887, 339, '846.32'], [1152, 533, '786.28']]
  .forEach(([x, y, s]) => text(x, y, s, '#1000b8', 'small'));
path('M210 122.500H191M196 118l-5 4.500 5 4.500', '#c00018');
text(211, 126, '최고 902.40(2023/09/15, -5.01%)', '#c00018');
path('M497 709.500H478M483 705l-5 4.500 5 4.500', '#0a0aa0');
text(497, 714, '최저 734.20(2023/10/31, +16.76%)', '#0a0aa0');

// measured range
path('M1036.500 377V564.500H1205.500V430', '#d00010');
out.push('<circle cx="1037" cy="377" r="3" fill="#e00"/><path d="M1205.500 426l4 7h-8z" fill="#e00"/>');
rect(1038.5, 566.5, 183, 19, '#fff', 'stroke="#9a94dc"');
text(1043, 581, '17 캔들');
out.push('<path d="M1092 573h10l-5 8z" fill="#6460f0"/>');
text(1107, 581, '6.47 (-0.78%)', '#0a0ac0');
text(1043, 596, '2024/01/17 ~ 2024/02/08');

// legend
[[190, 195, '대기매물', '#000', 'lg'], [250, 256, 'KOSDAQ', '#000', 'name-label'], [304, 310, '가격이평', '#559a1e', 'lg'],
 [0, 364, '5', '#559a1e', ''], [377, 382, '10', '#5548e0', ''], [401, 406, '20', '#2c84c4', ''],
 [425, 430, '60', '#0a0aa0', ''], [449, 454, '120', '#6e1c44', ''], [478, 483, '240', '#f04858', '']]
  .forEach(([mark, x, s, colour, cls]) => {
    if (mark) rect(mark, 82, 3, 7, colour);
    text(x, 90, s, colour, cls);
  });

// volume pane
rect(184, 744, 1207, 1, '#888');
rect(190, 751, 3, 7, '#000');
text(196, 759, '거래량', '#000', 'lg');
volume.forEach((v, i) => rect(Math.round(185 + i * STEP), +v.slice(1), 9, 793 - v.slice(1), v[0] === 'R' ? RED : BLUE));

// axes
rect(184, 794, 1207, 1, '#bbb');
rect(1318, 76, 1, 735, '#bbb');
[[186, '2023/09', 'bold'], [282, '10'], [483, '11'], [716, '12'], [916, '2024/01', 'bold'], [1148, '02']]
  .forEach(([x, s, cls]) => text(x, 807, s, '#000', cls || ''));
text(1328, 808, '02/20');
text(1366, 777, '1,000M', '#000', '', 'end');
text(1366, 792, '0M', '#000', '', 'end');
[[156, '900.00'], [317, '850.00'], [479, '800.00'], [640, '750.00']].forEach(([y, s]) => text(1329, y, s));
text(1321, 97, 'HL -18.64%', '#0a0ac0');
rect(1326, 282, 62, 28, '#f00');
out.push('<path d="M1319 291l5-5v10z" fill="#d00"/>');
text(1328, 294, '857.23', '#fff');
text(1328, 308, '(0.46%)', '#fff');
[[513, '785.61'], [650, '743.23']].forEach(([y, s]) => {
  rect(1318.5, y + .5, 41, 14, '#e2fbe2', 'stroke="#000"');
  text(1321, y + 12, s);
});

// pane buttons
const box = (x, y, s) => { rect(x + .5, y + .5, 9, 8, '#fff', 'stroke="#000"'); text(x + 5, y + 8, s, '#000', 'tiny', 'middle'); };
box(1319, 76, 'L'); box(1328, 76, 'I'); box(1337, 76, 'R');
box(1319, 745, 'L'); box(1328, 745, 'I');
box(1380, 76, ''); box(1371, 745, ''); box(1380, 745, '');
path('M1382.500 78.500h5v4h-5zM1373.500 747.500h5v4h-5zM1382.500 747.500l5 5M1387.500 747.500l-5 5', '#000');

document.getElementById('chart').innerHTML = out.join('');
document.getElementById('ticks').setAttribute('d',
  Array.from({ length: 16 }, (_, i) => `M${i * 4 + .5} ${i % 5 ? 2 : 0}V5`).join(''));
```
